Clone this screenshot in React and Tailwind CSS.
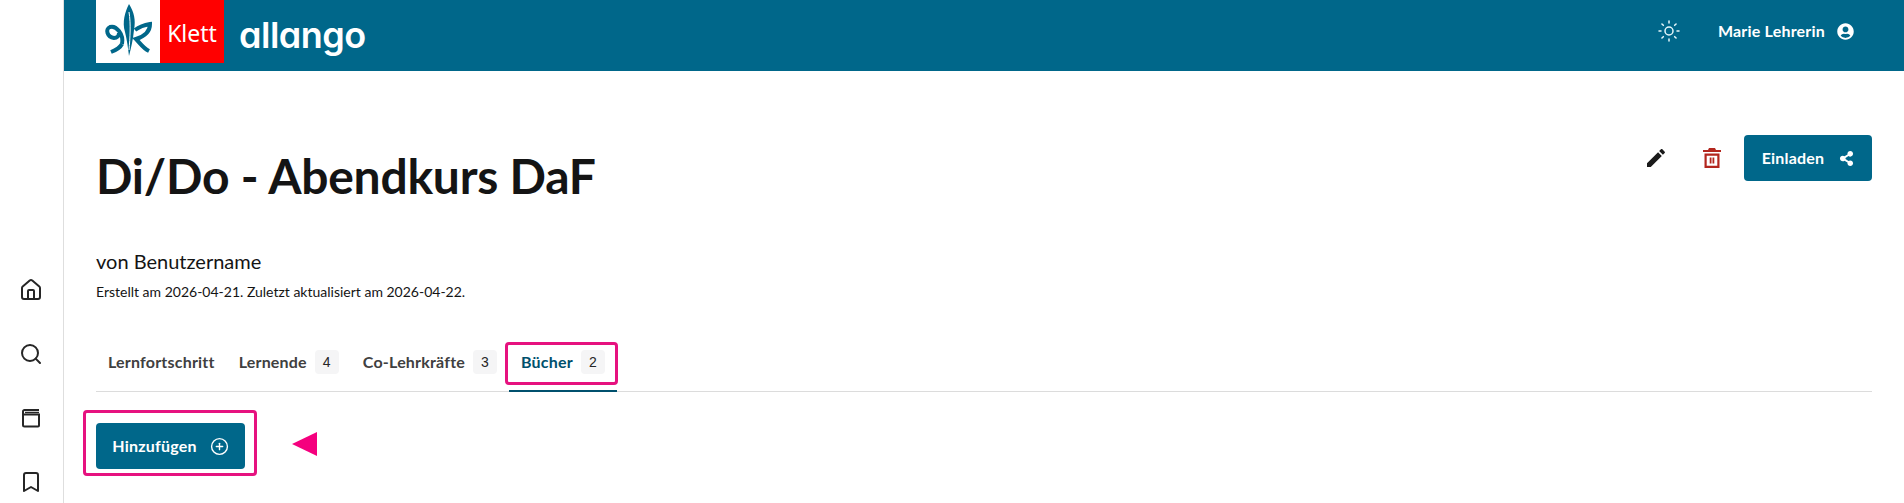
import { Home, Search, Bookmark, Sun, CirclePlus } from "lucide-react";
import { FaUserCircle, FaShareAlt } from "react-icons/fa";

const tabs = [
  { label: "Lernfortschritt" },
  { label: "Lernende", count: 4 },
  { label: "Co-Lehrkräfte", count: 3 },
  { label: "Bücher", count: 2, active: true },
];

const KlettLeaf = () => (
  <svg viewBox="0 0 64 62" className="w-16 h-[62px]" fill="none" stroke="#00678a">
    <path d="M33 4 C38 12 40 20 38 30 C37 40 35 48 33 56 C32 48 31 40 29 32 C26 22 29 12 33 4 Z" fill="#00678a" stroke="none" />
    <path d="M33 12 C35 24 34 38 33 50" stroke="#fff" strokeWidth="1" />
    <path d="M26 44 C28 34 20 25 14 27 C9 29 11 37 18 38 C21 38 23 36 23 33" strokeWidth="4" />
    <path d="M26 44 C24 48 20 50 15 52" strokeWidth="4" />
    <path d="M39 30 C43 27 48 25 54 24 C54 30 50 36 40 39 C44 43 47 48 53 51" strokeWidth="4" />
  </svg>
);

const BookIcon = () => (
  <svg viewBox="0 0 24 24" className="w-6 h-6" fill="none" stroke="#262626" strokeWidth="2">
    <path d="M4 8.5h16v11a1 1 0 0 1-1 1H5.5A1.5 1.5 0 0 1 4 19V5.5A1.5 1.5 0 0 1 5.5 4H20" />
    <path d="M6 6.5h14" strokeWidth="1.5" />
  </svg>
);

const TrashIcon = () => (
  <svg viewBox="0 0 24 24" className="w-6 h-6" fill="#b3261e">
    <path d="M9 2h6l1 2h5v2H3V4h5l1-2zM4.5 7.5h15V22h-15V7.5zm2.2 2.2v10.1h10.6V9.7H6.7zM9.7 11.5h1.8v6H9.7v-6zm2.8 0h1.8v6h-1.8v-6z" fillRule="evenodd" />
  </svg>
);

const PencilIcon = () => (
  <svg viewBox="0 0 24 24" className="w-6 h-6" fill="#1a1a1a">
    <path d="M3 17.25V21h3.75L17.81 9.94l-3.75-3.75L3 17.25zM20.71 7.04c.39-.39.39-1.02 0-1.41l-2.34-2.34c-.39-.39-1.02-.39-1.41 0l-1.83 1.83 3.75 3.75 1.83-1.83z" />
  </svg>
);

const App = () => {
  return (
    <div className="flex h-[503px] overflow-hidden bg-white font-['Lato',sans-serif] text-[#141414]">
      {/* Sidebar */}
      <aside className="w-16 shrink-0 border-r border-[#dedede] flex flex-col items-center gap-10 pt-[278px] pr-[1px] text-[#262626]">
        <Home size={24} strokeWidth={2} />
        <Search size={24} strokeWidth={2} />
        <BookIcon />
        <Bookmark size={24} strokeWidth={2} />
      </aside>

      <div className="flex-1 min-w-0 relative">
        {/* Header */}
        <header className="h-[71px] bg-[#00678a] flex items-start pl-8 pr-[50px] text-white">
          <div className="flex h-[63px]">
            <div className="w-16 bg-white">
              <KlettLeaf />
            </div>
            <div className="w-16 bg-[#ff0000] flex items-center justify-center text-[23px] font-['Noto_Sans',sans-serif] pt-1">
              Klett
            </div>
          </div>
          <div className="ml-[15px] h-[70px] flex items-center text-[36px] font-semibold font-['Inter',sans-serif] [font-feature-settings:'cv11'] tracking-[-0.5px]">
            allango
          </div>
          <div className="ml-auto h-[62px] flex items-center">
            <Sun size={24} strokeWidth={1.5} className="text-[#e6f7fb]" />
            <span className="ml-[37px] text-[16px] font-bold tracking-[0.2px]">Marie Lehrerin</span>
            <FaUserCircle size={17} className="ml-[12px]" />
          </div>
        </header>

        <main className="px-8">
          {/* Title row */}
          <div className="flex justify-between items-start pt-[64px]">
            <h1 className="text-[48px] leading-[82px] font-bold tracking-[-0.24px]">Di/Do - Abendkurs DaF</h1>
            <div className="flex items-center">
              <PencilIcon />
              <span className="ml-[32px]">
                <TrashIcon />
              </span>
              <button className="ml-[20px] w-[128px] h-[46px] rounded bg-[#00678a] text-white text-[16px] font-bold tracking-[0.2px] flex items-center justify-center gap-[15px]">
                Einladen
                <FaShareAlt size={15} />
              </button>
            </div>
          </div>

          <p className="mt-[30px] text-[20px] leading-7">von Benutzername</p>
          <p className="mt-[7px] text-[14px] leading-5">Erstellt am 2026-04-21. Zuletzt aktualisiert am 2026-04-22.</p>

          {/* Tabs */}
          <div className="mt-[35px] flex border-b border-[#dcdcdc] h-[55px]">
            {tabs.map((tab) => (
              <div
                key={tab.label}
                className={`px-3 pb-[3px] flex items-center gap-2 h-[55px] text-[16px] font-bold tracking-[0.2px] ${
                  tab.active ? "text-[#00506d] border-b-2 border-[#00506d]" : "text-[#404040] border-b-2 border-transparent"
                }`}
              >
                {tab.label}
                {tab.count && (
                  <span className="w-6 h-6 rounded bg-[#f5f5f6] flex items-center justify-center text-sm font-normal font-['Liberation_Sans',sans-serif] text-[#262626]">
                    {tab.count}
                  </span>
                )}
              </div>
            ))}
          </div>

          <button className="mt-[31px] w-[149px] h-[46px] rounded bg-[#00678a] text-white text-[16px] font-bold tracking-[0.2px] flex items-center justify-center gap-[13px]">
            Hinzufügen
            <CirclePlus size={19} strokeWidth={1.75} />
          </button>
        </main>

        {/* Annotations */}
        <div className="absolute left-[441px] top-[342px] w-[113px] h-[43px] border-[3px] border-[#e6127f] rounded-sm" />
        <div className="absolute left-[19px] top-[410px] w-[174px] h-[66px] border-[3px] border-[#e6127f] rounded-sm" />
        <svg className="absolute left-[228px] top-[432px] w-[26px] h-[24px]" viewBox="0 0 26 24">
          <path d="M0 12 L25 0 V24 Z" fill="#f5007e" />
        </svg>
      </div>
    </div>
  );
};

export default App;
